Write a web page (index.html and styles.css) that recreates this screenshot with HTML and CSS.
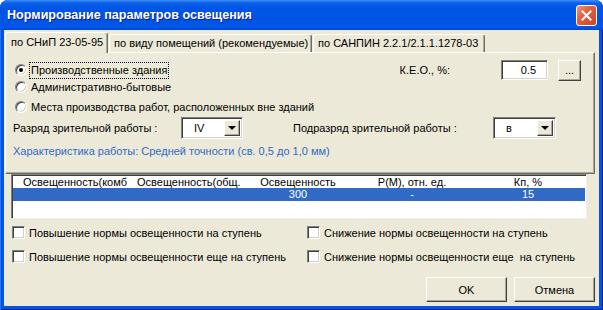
FILE: index.html
```html
<!DOCTYPE html>
<html lang="ru">
<head>
  <meta charset="UTF-8">
  <title>Нормирование параметров освещения</title>
  <link rel="stylesheet" href="styles.css">
</head>
<body>
  <div class="okno">
    <div class="zagolovok">
      <span class="zagolovok-tekst">Нормирование параметров освещения</span>
      <span class="zakryt">
        <svg width="11" height="11" viewBox="0 0 11 11"><path d="M1.5 1.5 L9.5 9.5 M9.5 1.5 L1.5 9.5" stroke="#fff" stroke-width="2" stroke-linecap="square"/></svg>
      </span>
    </div>

    <div class="klient">
      <div class="vkladki">
        <div class="vkladka aktivnaya">по СНиП 23-05-95</div>
        <div class="vkladka v2">по виду помещений (рекомендуемые)</div>
        <div class="vkladka v3">по САНПИН 2.2.1/2.1.1.1278-03</div>
      </div>

      <div class="panel">
        <div class="stroka s1">
          <span class="radio vybran"></span>
          <span class="fokus">Производственные здания</span>
          <span class="keo">К.Е.О., %:</span>
          <span class="pole">0.5</span>
          <span class="knopka tochki">...</span>
        </div>
        <div class="stroka s2">
          <span class="radio"></span>
          <span class="metka">Административно-бытовые</span>
        </div>
        <div class="stroka s3">
          <span class="radio"></span>
          <span class="metka">Места производства работ, расположенных вне зданий</span>
        </div>
        <div class="stroka s4">
          <span class="podpis p1">Разряд зрительной работы :</span>
          <span class="spisok sp1"><span class="znach">IV</span><span class="strelka"></span></span>
          <span class="podpis p2">Подразряд зрительной работы :</span>
          <span class="spisok sp2"><span class="znach">в</span><span class="strelka"></span></span>
        </div>
        <div class="harakteristika">Характеристика работы: Средней точности (св. 0,5 до 1,0 мм)</div>
      </div>

      <div class="tablica">
        <div class="tstroka shapka">
          <span class="k1">Освещенность(комб</span>
          <span class="k2">Освещенность(общ.</span>
          <span class="k3">Освещенность</span>
          <span class="k4">P(M), отн. ед.</span>
          <span class="k5">Кп, %</span>
        </div>
        <div class="tstroka vydelena">
          <span class="k1"></span>
          <span class="k2"></span>
          <span class="k3">300</span>
          <span class="k4">-</span>
          <span class="k5">15</span>
        </div>
      </div>

      <div class="flazhki">
        <div class="flazhok"><span class="kvadrat"></span><span class="tekst">Повышение нормы освещенности на ступень</span></div>
        <div class="flazhok"><span class="kvadrat"></span><span class="tekst">Снижение нормы освещенности на ступень</span></div>
        <div class="flazhok"><span class="kvadrat"></span><span class="tekst">Повышение нормы освещенности еще на ступень</span></div>
        <div class="flazhok"><span class="kvadrat"></span><span class="tekst">Снижение нормы освещенности еще&nbsp; на ступень</span></div>
      </div>

      <div class="knopki">
        <span class="knopka">OK</span>
        <span class="knopka">Отмена</span>
      </div>
    </div>
  </div>
</body>
</html>
```

FILE: styles.css
```css
* {
  box-sizing: border-box;
}

body {
  margin: 0;
  font-family: "Liberation Sans", Arial, sans-serif;
  font-size: 11px;
  color: #000;
  background: #fff;
}

/* окно */
.okno {
  width: 603px;
  height: 310px;
  display: flex;
  flex-direction: column;
  background: #0055e5;
  border-radius: 8px 8px 0 0;
  box-shadow: inset 1px 0 #2a72ee, inset -1px 0 #001ea0, inset 0 -1px #001ea0;
}

.zagolovok {
  height: 30px;
  display: flex;
  align-items: center;
  padding: 0 6px 0 7px;
  border-radius: 8px 8px 0 0;
  background: linear-gradient(#3d8ff8 0, #0a5fe8 3px, #0055e5 8px, #0054e3 22px, #0158ea 27px, #0046cf 30px);
}

.zagolovok-tekst {
  color: #fff;
  font-weight: bold;
  font-size: 12.6px;
  text-shadow: 1px 1px #0f1f8a;
}

.zakryt {
  margin-left: auto;
  width: 21px;
  height: 21px;
  border: 1px solid #fff;
  border-radius: 3px;
  background: linear-gradient(135deg, #f29378, #e3603e 40%, #d4482a 90%);
  display: flex;
  align-items: center;
  justify-content: center;
}

.klient {
  flex: 1;
  margin: 0 4px 4px;
  background: #ece9d8;
  padding: 2px 4px 0 1px;
  display: flex;
  flex-direction: column;
}

/* вкладки */
.vkladki {
  display: flex;
  height: 20px;
  align-items: flex-end;
}

.vkladka {
  height: 18px;
  line-height: 16px;
  padding-left: 4px;
  margin-left: 1px;
  background: #ece9d8;
  border: 1px solid;
  border-color: #fff #716f64 transparent #fff;
  border-bottom: 0;
  border-radius: 3px 3px 0 0;
  box-shadow: inset -1px 0 #aca899;
  white-space: nowrap;
}

.aktivnaya {
  width: 103px;
  height: 21px;
  line-height: 18px;
  padding-left: 5px;
  margin-left: 0;
  margin-bottom: -1px;
  position: relative;
  z-index: 1;
}

.v2 { width: 203px; }
.v3 { width: 172px; }

.panel {
  height: 122px;
  border: 1px solid;
  border-color: #fff #716f64 #716f64 #fff;
  box-shadow: inset -1px -1px #aca899;
  padding: 7px 13px 0 7px;
}

.stroka {
  display: flex;
  align-items: center;
  white-space: nowrap;
}

.s1 { height: 20px; }
.s2 { height: 14px; }
.s3 { height: 14px; margin-top: 6px; }
.s4 { height: 22px; margin-top: 3px; }

.harakteristika {
  margin-top: 5px;
  line-height: 14px;
  color: #3069c8;
}

.radio {
  flex: none;
  width: 12px;
  height: 12px;
  margin-left: 2px;
  border-radius: 50%;
  background: #fff;
  border: 1px solid;
  border-color: #808080 #fff #fff #808080;
  box-shadow: inset 1px 1px #404040, inset -1px -1px #d4d0c8;
  display: flex;
  align-items: center;
  justify-content: center;
}

.vybran::after {
  content: "";
  width: 4px;
  height: 4px;
  border-radius: 50%;
  background: #000;
}

.fokus {
  margin-left: 2px;
  padding: 1px;
  border: 1px dotted #000;
  line-height: 13px;
}

.metka {
  margin-left: 4px;
}

.keo {
  margin-left: auto;
  margin-right: 51px;
}

.pole {
  width: 47px;
  height: 20px;
  line-height: 18px;
  padding-right: 11px;
  text-align: right;
  background: #fff;
  border: 1px solid;
  border-color: #808080 #fff #fff #808080;
  box-shadow: inset 1px 1px #404040, inset -1px -1px #d4d0c8;
}

.knopka {
  display: flex;
  align-items: center;
  justify-content: center;
  background: #ece9d8;
  border: 1px solid;
  border-color: #fff #404040 #404040 #fff;
  box-shadow: inset -1px -1px #aca899;
}

.tochki {
  width: 23px;
  height: 21px;
  margin-left: 10px;
}

.p1 { width: 168px; }
.p2 { width: 200px; margin-left: 50px; }

.spisok {
  display: flex;
  height: 22px;
  padding: 2px;
  background: #fff;
  border: 1px solid;
  border-color: #808080 #fff #fff #808080;
  box-shadow: inset 1px 1px #404040, inset -1px -1px #d4d0c8;
}

.sp1 { width: 62px; }
.sp2 { width: 63px; }

.znach {
  flex: 1;
  padding-left: 10px;
  line-height: 16px;
}

.strelka {
  width: 16px;
  background: #ece9d8;
  border: 1px solid;
  border-color: #fff #404040 #404040 #fff;
  box-shadow: inset -1px -1px #aca899;
  display: flex;
  align-items: center;
  justify-content: center;
}

.strelka::after {
  content: "";
  border: 4px solid transparent;
  border-top: 4px solid #000;
  border-bottom: 0;
}

/* таблица */
.tablica {
  margin-left: 6px;
  width: 576px;
  height: 45px;
  padding: 1px;
  background: #fff;
  border: 1px solid;
  border-color: #808080 #f1efe2 #f1efe2 #808080;
  box-shadow: inset 1px 1px #404040;
}

.tstroka {
  display: flex;
  white-space: nowrap;
}

.tstroka span {
  overflow: hidden;
}

.shapka {
  height: 12px;
  line-height: 12px;
}

.vydelena {
  height: 13px;
  line-height: 13px;
  background: #316ac5;
  color: #fff;
}

.k1 { width: 117px; padding-left: 10px; }
.k2 { width: 120px; padding-left: 7px; }
.k3 { width: 96px; text-align: center; }
.k4 { width: 132px; text-align: center; }
.k5 { width: 100px; text-align: center; }

/* флажки */
.flazhki {
  margin-top: 7px;
  padding-left: 7px;
  display: grid;
  grid-template-columns: 295px auto;
  row-gap: 11px;
}

.flazhok {
  display: flex;
  align-items: center;
  height: 13px;
  white-space: nowrap;
}

.kvadrat {
  flex: none;
  width: 13px;
  height: 13px;
  background: #fff;
  border: 1px solid;
  border-color: #808080 #fff #fff #808080;
  box-shadow: inset 1px 1px #404040, inset -1px -1px #d4d0c8;
}

.flazhok .tekst {
  margin-left: 4px;
}

.knopki {
  margin-top: 14px;
  display: flex;
  justify-content: flex-end;
  gap: 7px;
}

.knopki .knopka {
  width: 81px;
  height: 25px;
}
```
